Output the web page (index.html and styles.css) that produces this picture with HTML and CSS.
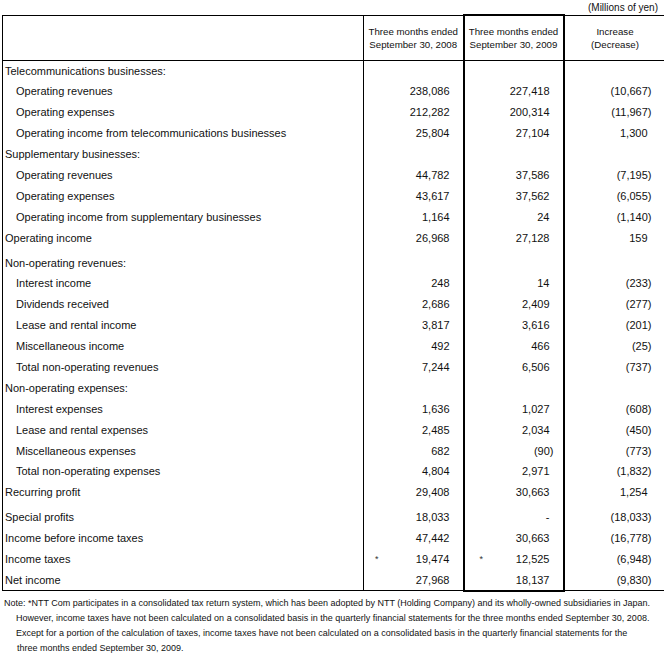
FILE: index.html
```html
<!DOCTYPE html>
<html>
<head>
<meta charset="utf-8">
<link rel="stylesheet" href="styles.css">
</head>
<body>
<div class="page">
  <div class="unit">(Millions of yen)</div>
  <table class="pl">
    <colgroup>
      <col class="c-label"><col class="c-num"><col class="c-num"><col class="c-inc">
    </colgroup>
    <thead>
      <tr class="head">
        <th></th>
        <th>Three months ended<br>September 30, 2008</th>
        <th class="hl">Three months ended<br>September 30, 2009</th>
        <th>Increase<br>(Decrease)</th>
      </tr>
    </thead>
    <tbody>
      <tr class="sec"><td>Telecommunications businesses:</td><td></td><td class="hl"></td><td></td></tr>
      <tr class="item"><td>Operating revenues</td><td>238,086</td><td class="hl">227,418</td><td class="neg">(10,667)</td></tr>
      <tr class="item"><td>Operating expenses</td><td>212,282</td><td class="hl">200,314</td><td class="neg">(11,967)</td></tr>
      <tr class="item"><td>Operating income from telecommunications businesses</td><td>25,804</td><td class="hl">27,104</td><td>1,300</td></tr>
      <tr class="sec"><td>Supplementary businesses:</td><td></td><td class="hl"></td><td></td></tr>
      <tr class="item"><td>Operating revenues</td><td>44,782</td><td class="hl">37,586</td><td class="neg">(7,195)</td></tr>
      <tr class="item"><td>Operating expenses</td><td>43,617</td><td class="hl">37,562</td><td class="neg">(6,055)</td></tr>
      <tr class="item"><td>Operating income from supplementary businesses</td><td>1,164</td><td class="hl">24</td><td class="neg">(1,140)</td></tr>
      <tr class="sec"><td>Operating income</td><td>26,968</td><td class="hl">27,128</td><td>159</td></tr>
      <tr class="sec tall"><td>Non-operating revenues:</td><td></td><td class="hl"></td><td></td></tr>
      <tr class="item"><td>Interest income</td><td>248</td><td class="hl">14</td><td class="neg">(233)</td></tr>
      <tr class="item"><td>Dividends received</td><td>2,686</td><td class="hl">2,409</td><td class="neg">(277)</td></tr>
      <tr class="item"><td>Lease and rental income</td><td>3,817</td><td class="hl">3,616</td><td class="neg">(201)</td></tr>
      <tr class="item"><td>Miscellaneous income</td><td>492</td><td class="hl">466</td><td class="neg">(25)</td></tr>
      <tr class="item"><td>Total non-operating revenues</td><td>7,244</td><td class="hl">6,506</td><td class="neg">(737)</td></tr>
      <tr class="sec"><td>Non-operating expenses:</td><td></td><td class="hl"></td><td></td></tr>
      <tr class="item"><td>Interest expenses</td><td>1,636</td><td class="hl">1,027</td><td class="neg">(608)</td></tr>
      <tr class="item"><td>Lease and rental expenses</td><td>2,485</td><td class="hl">2,034</td><td class="neg">(450)</td></tr>
      <tr class="item"><td>Miscellaneous expenses</td><td>682</td><td class="hl neg">(90)</td><td class="neg">(773)</td></tr>
      <tr class="item"><td>Total non-operating expenses</td><td>4,804</td><td class="hl">2,971</td><td class="neg">(1,832)</td></tr>
      <tr class="sec"><td>Recurring profit</td><td>29,408</td><td class="hl">30,663</td><td>1,254</td></tr>
      <tr class="sec tall"><td>Special profits</td><td>18,033</td><td class="hl">-</td><td class="neg">(18,033)</td></tr>
      <tr class="sec"><td>Income before income taxes</td><td>47,442</td><td class="hl">30,663</td><td class="neg">(16,778)</td></tr>
      <tr class="sec"><td>Income taxes</td><td><span class="ast a1">*</span>19,474</td><td class="hl"><span class="ast a2">*</span>12,525</td><td class="neg">(6,948)</td></tr>
      <tr class="sec last"><td>Net income</td><td>27,968</td><td class="hl">18,137</td><td class="neg">(9,830)</td></tr>
    </tbody>
  </table>
  <div class="note">
    <div class="nl first">Note: *NTT Com participates in a consolidated tax return system, which has been adopted by NTT (Holding Company) and its wholly-owned subsidiaries in Japan.</div>
    <div class="nl">However, income taxes have not been calculated on a consolidated basis in the quarterly financial statements for the three months ended September 30, 2008.</div>
    <div class="nl">Except for a portion of the calculation of taxes, income taxes have not been calculated on a consolidated basis in the quarterly financial statements for the</div>
    <div class="nl last">three months ended September 30, 2009.</div>
  </div>
</div>
</body>
</html>
```

FILE: styles.css
```css
html, body {
  margin: 0;
  padding: 0;
  background: #fff;
  overflow: hidden;
}
body {
  font-family: "Liberation Sans", Arial, sans-serif;
  color: #111;
}
.page {
  width: 664px;
  padding: 1px 0 0 2px;
  box-sizing: border-box;
}
.unit {
  text-align: right;
  font-size: 10px;
  line-height: 13px;
  padding-right: 6px;
}
.pl {
  border-collapse: collapse;
  table-layout: fixed;
  width: 663px;
  font-size: 11px;
  border-left: 1px solid #000;
  border-top: 1px solid #000;
  border-bottom: 1px solid #000;
}
.c-label { width: 361px; }
.c-num { width: 100px; }
.c-inc { width: 102px; }
.pl th {
  font-weight: normal;
  font-size: 9.7px;
  line-height: 13px;
  height: 44px;
  padding: 0;
  text-align: center;
  vertical-align: middle;
  border-bottom: 1px solid #000;
  border-left: 1px solid #000;
}
.pl tbody tr { height: 20.9px; }
.pl tbody tr.tall { height: 25px; }
.pl td {
  padding: 0 13px 0 0;
  line-height: 13px;
  text-align: right;
  vertical-align: middle;
  white-space: nowrap;
  border-left: 1px solid #000;
}
.pl td:first-child {
  text-align: left;
  padding-left: 2px;
}
.pl .item td:first-child { padding-left: 13px; }
.pl tr.tall td {
  vertical-align: bottom;
  padding-bottom: 4px;
}
.pl td.neg { padding-right: 9px; }
.pl td:last-child { padding-right: 18px; }
.pl td.neg:last-child { padding-right: 14px; }
.pl .hl {
  border-left: 2px solid #000;
  border-right: 2px solid #000;
}
.pl th.hl { border-top: 2px solid #000; }
.pl tr.last td.hl { border-bottom: 2px solid #000; }
.ast {
  float: left;
  font-size: 9px;
  color: #333;
}
.a1 { margin-left: 11px; }
.a2 { margin-left: 15px; }
.note {
  font-size: 9px;
  line-height: 15px;
  padding-top: 4px;
  white-space: nowrap;
}
.nl { padding-left: 14px; }
.nl.first { padding-left: 2px; }
.nl.last { padding-left: 15px; }
```
